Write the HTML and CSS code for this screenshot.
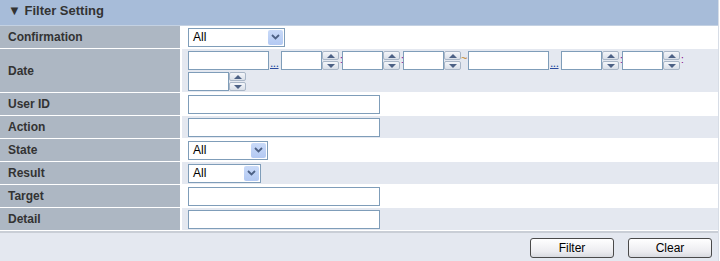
FILE: index.html
```html
<!DOCTYPE html>
<html>
<head>
<meta charset="utf-8">
<link rel="stylesheet" href="styles.css">
</head>
<body>
<div class="panel">
  <div class="head">&#9660; Filter Setting</div>
  <div class="rows">
    <div class="row">
      <div class="lbl">Confirmation</div>
      <div class="val"><div class="sel w96"><span class="sv">All</span><span class="arr"><svg width="9" height="6" viewBox="0 0 9 6"><path d="M1 1 L4.5 4.5 L8 1" fill="none" stroke="#4d6185" stroke-width="1.8"/></svg></span></div></div>
    </div>
    <div class="row alt tall">
      <div class="lbl">Date</div>
      <div class="val wrap">
        <span class="grp"><input class="ti w80"><a class="dots">...</a></span>
        <span class="grp"><input class="ti w40"><span class="spin"><b class="up"></b><b class="dn"></b></span><i class="col">:</i></span>
        <span class="grp"><input class="ti w40"><span class="spin"><b class="up"></b><b class="dn"></b></span><i class="col">:</i></span>
        <span class="grp"><input class="ti w40"><span class="spin"><b class="up"></b><b class="dn"></b></span><i class="tl">~</i></span>
        <span class="grp"><input class="ti w80"><a class="dots">...</a></span>
        <span class="grp"><input class="ti w40"><span class="spin"><b class="up"></b><b class="dn"></b></span><i class="col">:</i></span>
        <span class="grp"><input class="ti w40"><span class="spin"><b class="up"></b><b class="dn"></b></span><i class="col">:</i></span>
        <span class="grp"><input class="ti w40"><span class="spin"><b class="up"></b><b class="dn"></b></span></span>
      </div>
    </div>
    <div class="row">
      <div class="lbl">User ID</div>
      <div class="val"><input class="ti w191"></div>
    </div>
    <div class="row alt">
      <div class="lbl">Action</div>
      <div class="val"><input class="ti w191"></div>
    </div>
    <div class="row">
      <div class="lbl">State</div>
      <div class="val"><div class="sel w79"><span class="sv">All</span><span class="arr"><svg width="9" height="6" viewBox="0 0 9 6"><path d="M1 1 L4.5 4.5 L8 1" fill="none" stroke="#4d6185" stroke-width="1.8"/></svg></span></div></div>
    </div>
    <div class="row alt">
      <div class="lbl">Result</div>
      <div class="val"><div class="sel w72"><span class="sv">All</span><span class="arr"><svg width="9" height="6" viewBox="0 0 9 6"><path d="M1 1 L4.5 4.5 L8 1" fill="none" stroke="#4d6185" stroke-width="1.8"/></svg></span></div></div>
    </div>
    <div class="row">
      <div class="lbl">Target</div>
      <div class="val"><input class="ti w191"></div>
    </div>
    <div class="row alt">
      <div class="lbl">Detail</div>
      <div class="val"><input class="ti w191"></div>
    </div>
  </div>
  <div class="foot">
    <button class="btn">Filter</button>
    <button class="btn">Clear</button>
  </div>
</div>
</body>
</html>
```
FILE: styles.css
```css
* { box-sizing: border-box; }
html, body { margin: 0; padding: 0; background: #fff; }
body { font-family: "Liberation Sans", Arial, sans-serif; font-size: 12px; color: #000; }
.panel { width: 719px; height: 261px; border-right: 1px solid #d7dde6; display: flex; flex-direction: column; background: #e4e8f0; }
.head { height: 26px; background: #a7bcd9; border-bottom: 1px solid #c4d1e2; font-weight: bold; font-size: 13px; color: #333; padding: 3px 0 0 8px; }
.rows { display: flex; flex-direction: column; background: #fff; }
.row { display: grid; grid-template-columns: 180px 1fr; column-gap: 2px; height: 23px; border-bottom: 1px solid #fff; background: #fff; }
.row.tall { height: 44px; }
.lbl { background: #adb7c3; font-weight: bold; color: #333; padding-left: 8px; display: flex; align-items: center; }
.val { background: #fff; display: flex; align-items: center; padding-left: 6px; }
.row.alt .val { background: #e4e8f0; }
.val.wrap { flex-wrap: wrap; align-content: flex-start; padding-top: 2px; row-gap: 2px; }
.ti { height: 19px; border: 1px solid #7f9db9; background: #fff; padding: 0; margin: 0; font: inherit; }
.w40 { width: 41px; }
.w80 { width: 81px; }
.w191 { width: 192px; }
.grp { display: inline-flex; align-items: flex-start; height: 19px; }
.dots { color: #2a4ba0; text-decoration: underline; font-size: 12px; width: 12px; line-height: 19px; padding: 3px 0 0 1px; height: 19px; overflow: hidden; letter-spacing: -0.5px; }
.spin { display: inline-flex; flex-direction: column; }
.spin b { display: block; width: 17px; height: 9px; border: 1px solid #a9b6c7; border-radius: 2px; background: linear-gradient(#f4f6fa, #d9dfe8); position: relative; }
.spin b + b { margin-top: 1px; }
.spin b::after { content: ""; position: absolute; left: 4px; width: 0; height: 0; border-left: 4px solid transparent; border-right: 4px solid transparent; }
.spin .up::after { top: 2px; border-bottom: 4px solid #4d6185; }
.spin .dn::after { top: 2px; border-top: 4px solid #4d6185; }
.col { font-style: normal; color: #800080; width: 3px; font-size: 10px; line-height: 17px; text-align: left; padding-left: 1px; }
.tl { font-style: normal; color: #c08020; width: 7px; font-size: 11px; line-height: 14px; }
.sel { height: 19px; border: 1px solid #7f9db9; background: #fff; display: flex; align-items: center; justify-content: space-between; padding: 1px; }
.w96 { width: 97px; }
.w79 { width: 80px; }
.w72 { width: 73px; }
.sv { padding-left: 3px; font-size: 12px; }
.arr { width: 15px; height: 15px; background: linear-gradient(#c9daf8, #b3c9f3); border-radius: 2px; display: flex; align-items: center; justify-content: center; }
.foot { flex: 1; border-top: 2px solid #c9ced6; background: #e4e8f0; display: flex; justify-content: flex-end; align-items: center; gap: 14px; padding: 2px 6px 0 0; }
.btn { width: 84px; height: 20px; border: 1px solid #4a4a4a; border-radius: 3px; background: linear-gradient(#ffffff, #ececf0 70%, #d8dae0); font: 12px "Liberation Sans", Arial, sans-serif; color: #000; padding: 0; }
```
